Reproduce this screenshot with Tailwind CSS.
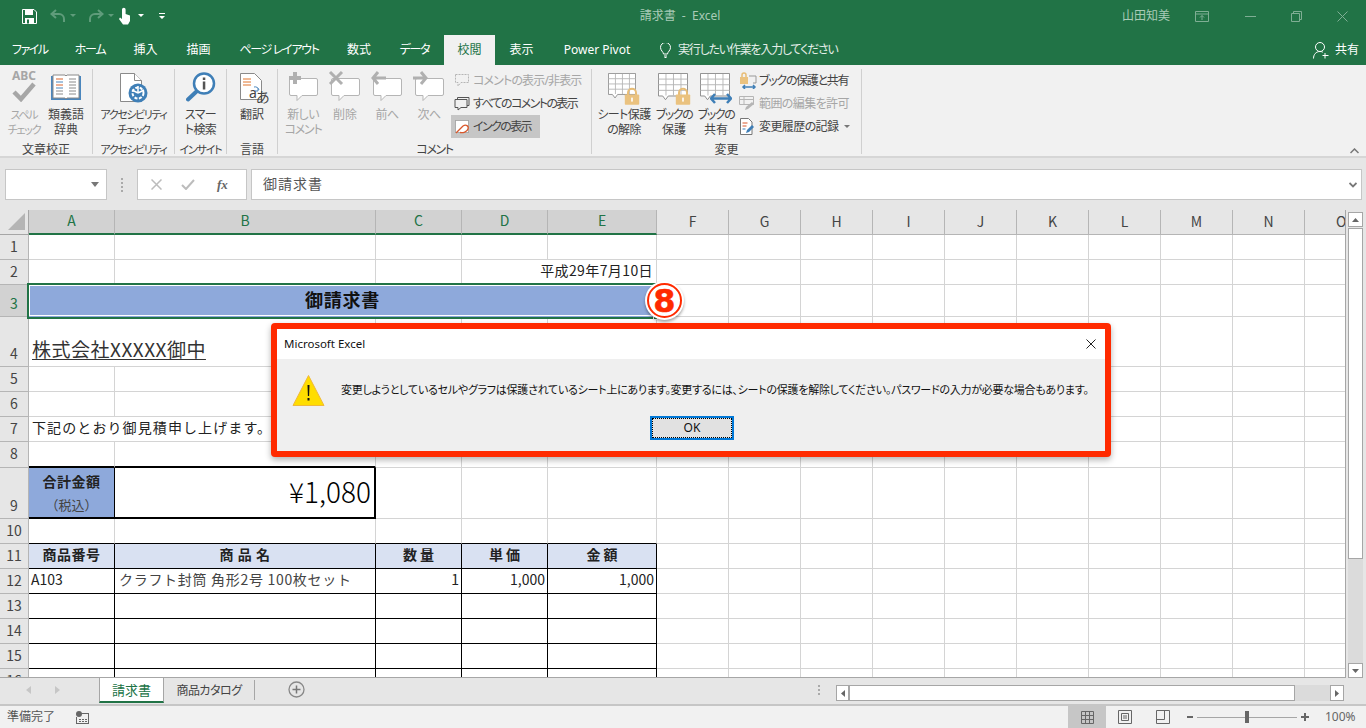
<!DOCTYPE html>
<html lang="ja">
<head>
    <meta charset="UTF-8">
    <title>請求書 - Excel</title>
    <script src="https://cdn.jsdelivr.net/npm/@tailwindcss/browser@4"></script>
</head>
<body class="relative w-[1366px] h-[728px] overflow-hidden flex flex-col bg-[#e6e6e6] text-[#444] text-[12px] font-[family-name:'Noto_Sans','Noto_Sans_CJK_JP',sans-serif] [font-feature-settings:'palt']">

    <svg class="hidden">
        <symbol id="bubble" viewBox="0 0 32 32">
            <path d="M4 6.500h25a1.500 1.500 0 0 1 1.500 1.500v14a1.500 1.500 0 0 1-1.500 1.500H15l-5 5v-5H4A1.500 1.500 0 0 1 2.500 22V8A1.500 1.500 0 0 1 4 6.500z" fill="#fff" stroke="#b5b5b5"/>
        </symbol>
        <symbol id="sheetgrid" viewBox="0 0 32 32">
            <path d="M.5.500h31v24H11l-3 4-3-4H.5z" fill="#fff" stroke="#8a8a8a"/>
            <path d="M.5 6.500h31M.5 12.500h31M.5 18.500h31M8.500 1v23M16.500 1v23M24.500 1v23" stroke="#b5b5b5" fill="none"/>
        </symbol>
        <symbol id="lock" viewBox="0 0 20 22">
            <path d="M5 10V7a5 5 0 0 1 10 0v3" fill="none" stroke="#e8bd76" stroke-width="2.500"/>
            <rect x="1" y="9" width="18" height="13" rx="1" fill="#eac27f"/>
            <rect x="9" y="13" width="2" height="5" fill="#fff"/>
        </symbol>
    </svg>

    <!-- title bar -->
    <header class="h-[35px] shrink-0 pb-[3px] bg-[#217346] flex items-center text-[#a9cbb7]">
        <div class="w-[600px] flex items-center pl-[22px]">
            <svg class="w-[15px] h-[15px]" viewBox="0 0 15 15"><path d="M.5.500h11.500l2.500 2.500v11.500H.5z" fill="none" stroke="#fff"/><rect x="3" y="1" width="8" height="5" fill="#fff"/><rect x="3" y="9" width="9" height="5.500" fill="#fff"/><rect x="5" y="10.500" width="2" height="4" fill="#217346"/></svg>
            <svg class="w-[16px] h-[15px] ml-[13px]" viewBox="0 0 16 15"><path d="M6 1 1.500 5 6 9M2 5h7a5 5 0 0 1 5 5v3" fill="none" stroke="#5f9c7b" stroke-width="2"/></svg>
            <svg class="w-[6px] h-[4px] ml-[4px]" viewBox="0 0 6 4"><path d="M0 0h6L3 3z" fill="#5f9c7b"/></svg>
            <svg class="w-[16px] h-[15px] ml-[12px]" viewBox="0 0 16 15"><path d="M10 1l4.500 4L10 9M14 5H7a5 5 0 0 0-5 5v3" fill="none" stroke="#5f9c7b" stroke-width="2"/></svg>
            <svg class="w-[6px] h-[4px] ml-[4px]" viewBox="0 0 6 4"><path d="M0 0h6L3 3z" fill="#5f9c7b"/></svg>
            <svg class="w-[13px] h-[18px] ml-[4px]" viewBox="0 0 13 18"><path d="M4 7V2.500a1.800 1.800 0 0 1 3.600 0V7l4.400 1.500V14l-2 3.500H5L1 12l1-1.500L4 12z" fill="#fff"/></svg>
            <svg class="w-[6px] h-[4px] ml-[7px]" viewBox="0 0 6 4"><path d="M0 0h6L3 3z" fill="#fff"/></svg>
            <svg class="w-[6px] h-[6px] ml-[15px]" viewBox="0 0 6 6"><path d="M0 0h6v1H0zM0 3h6L3 6z" fill="#fff"/></svg>
        </div>
        <div class="w-[160px] text-center text-[12px]">請求書 &nbsp;-&nbsp; Excel</div>
        <div class="ml-auto flex items-center">
            <span class="text-[12px] mr-[20px]">山田知美</span>
            <svg class="w-[14px] h-[11px] mr-[36px] ml-[5px]" viewBox="0 0 14 11"><path d="M.5.500h13v10H.5zM1 3h12M7 9V4.500M5 6.500l2-2 2 2" fill="none" stroke="#7fae94"/></svg>
            <svg class="w-[11px] h-[11px] mr-[35px]" viewBox="0 0 11 11"><path d="M0 5.500h11" stroke="#7fae94"/></svg>
            <svg class="w-[11px] h-[11px] mr-[35px]" viewBox="0 0 11 11"><path d="M.5 2.500h8v8h-8zM2.500 2.500v-2h8v8h-2" fill="none" stroke="#7fae94"/></svg>
            <svg class="w-[11px] h-[11px] mr-[18px]" viewBox="0 0 11 11"><path d="M.5.500l10 10M10.500.500l-10 10" stroke="#7fae94"/></svg>
        </div>
    </header>

    <!-- ribbon tabs -->
    <nav class="h-[30px] shrink-0 bg-[#217346] flex items-stretch text-white text-[12px] leading-[30px] whitespace-nowrap">
        <div class="w-[61px] pl-[12px] tracking-[-1.500px]">ファイル</div>
        <div class="w-[58px] text-center tracking-[-1.200px]">ホーム</div>
        <div class="w-[53px] text-center">挿入</div>
        <div class="w-[53px] text-center">描画</div>
        <div class="w-[108px] text-center tracking-[-1.300px]">ページ レイアウト</div>
        <div class="w-[52px] text-center">数式</div>
        <div class="w-[59px] text-center tracking-[-1.200px]">データ</div>
        <div class="w-[51px] text-center bg-[#f1f1f1] text-[#217346]">校閲</div>
        <div class="w-[53px] text-center">表示</div>
        <div class="w-[98px] text-center">Power Pivot</div>
        <div class="ml-[14px] flex items-center">
            <svg class="w-[11px] h-[15px] mr-[7px]" viewBox="0 0 11 15"><path d="M3.500 11c0-2-3-3.500-3-6.500a5 5 0 0 1 10 0c0 3-3 4.500-3 6.500zM4 13h3M4.500 14.500h2" fill="none" stroke="#fff"/></svg>
            <span class="text-[#e4eee8] tracking-[-1.200px]">実行したい作業を入力してください</span>
        </div>
        <div class="ml-auto flex items-center pr-[7px]">
            <svg class="w-[16px] h-[17px] mr-[6px]" viewBox="0 0 16 17"><circle cx="7" cy="5" r="4.500" fill="none" stroke="#fff"/><path d="M.5 16.500c0-4 2.500-7 6.500-7 1 0 2 .2 2.800.7M12 11v5.500M9.500 13.500h6" fill="none" stroke="#fff"/></svg>
            <span>共有</span>
        </div>
    </nav>

    <!-- ribbon -->
    <section class="h-[93px] shrink-0 bg-[#f1f1f1] border-b-2 border-[#d6d6d6] flex pt-[4px] relative leading-[15px] whitespace-nowrap tracking-[-0.600px]">
        <div class="w-[93px] h-[85px] border-r border-[#d0d0d0] flex flex-col">
            <div class="flex pl-[3px]">
                <div class="w-[42px] flex flex-col items-center text-[#a6a6a6] text-[11px] tracking-[-1.200px]">
                    <div class="h-[38px] w-[30px] relative">
                        <span class="absolute top-0 left-0 w-full text-center text-[12px] font-bold leading-[14px] tracking-normal">ABC</span>
                        <svg class="absolute left-[3px] top-[12px] w-[24px] h-[21px]" viewBox="0 0 24 21"><path d="M2 11l7 7L22 3" fill="none" stroke="#a6a6a6" stroke-width="4.500"/></svg>
                    </div>
                    <span>スペル</span><span>チェック</span>
                </div>
                <div class="w-[42px] flex flex-col items-center">
                    <div class="h-[38px] pt-[5px]">
                        <svg class="w-[32px] h-[27px]" viewBox="0 0 32 27"><path d="M1 2h30v24H1z" fill="#4a86bd"/><path d="M3 1h12l1 1 1-1h12v23H17l-1 1-1-1H3z" fill="#fff" stroke="#8a8a8a"/><path d="M6 5h7" stroke="#d9622b"/><path d="M6 8h7M6 14h7" stroke="#4a86bd"/><path d="M6 11h7" stroke="#d9622b"/><path d="M6 17h7M6 20h7M19 5h7M19 8h7M19 11h7M19 14h7M19 17h7M19 20h7" stroke="#8a8a8a"/></svg>
                    </div>
                    <span class="tracking-normal">類義語</span><span class="tracking-normal">辞典</span>
                </div>
            </div>
            <div class="mt-auto mb-[-3px] text-center tracking-normal">文章校正</div>
        </div>
        <div class="w-[82px] h-[85px] border-r border-[#d0d0d0] flex flex-col items-center text-[11px] tracking-[-1.400px]">
            <div class="h-[38px] pt-[4px]">
                <svg class="w-[30px] h-[30px]" viewBox="0 0 30 30"><path d="M1.500.500h14l7 7V28.500h-21z" fill="#fff" stroke="#8a8a8a"/><path d="M15.500.500v7h7" fill="#fff" stroke="#8a8a8a"/><circle cx="19" cy="20" r="9.500" fill="#3f7fb7"/><circle cx="19" cy="20" r="5.500" fill="none" stroke="#fff" stroke-width="2" stroke-dasharray="3 1.500"/><path d="M19 13v7M13 17l6 3M25 17l-6 3" stroke="#fff" stroke-width="1.500"/></svg>
            </div>
            <span>アクセシビリティ</span><span>チェック</span>
            <div class="mt-auto mb-[-3px]">アクセシビリティ</div>
        </div>
        <div class="w-[52px] h-[85px] border-r border-[#d0d0d0] flex flex-col items-center">
            <div class="h-[38px] pt-[3px]">
                <svg class="w-[30px] h-[30px]" viewBox="0 0 30 30"><path d="M11 19 2 27.500" stroke="#3f7fb7" stroke-width="4" stroke-linecap="round"/><circle cx="18" cy="11.500" r="10" fill="#fff" stroke="#3f7fb7" stroke-width="2.500"/><rect x="16.800" y="9.500" width="2.500" height="8" fill="#555"/><rect x="16.800" y="5.500" width="2.500" height="2.500" fill="#555"/></svg>
            </div>
            <span>スマー</span><span>ト検索</span>
            <div class="mt-auto mb-[-3px] text-[11px] tracking-[-1.200px]">インサイト</div>
        </div>
        <div class="w-[51px] h-[85px] border-r border-[#d0d0d0] flex flex-col items-center">
            <div class="h-[38px] relative w-[30px]">
                <svg class="w-[22px] h-[27px] absolute left-[3px] top-[4px]" viewBox="0 0 22 27"><path d="M.5.500h14l7 7V26.500H.5z" fill="#fff" stroke="#8a8a8a"/><path d="M3 6h8M3 9h8" stroke="#e0752d"/><path d="M3 12h8" stroke="#e0752d"/><path d="M14 14a4 4 0 0 1 5 3M18 15v3h-3" fill="none" stroke="#4a86bd"/></svg>
                <span class="absolute left-[12px] top-[17px] text-[14px] leading-[14px] text-[#444]">a</span>
                <span class="absolute left-[19px] top-[21px] text-[14px] leading-[14px] text-[#444]">あ</span>
            </div>
            <span class="tracking-normal">翻訳</span>
            <div class="mt-auto mb-[-3px] tracking-normal">言語</div>
        </div>
        <div class="w-[314px] h-[85px] border-r border-[#d0d0d0] flex flex-col">
            <div class="flex pl-[4px]">
                <div class="w-[42px] flex flex-col items-center text-[#a6a6a6]">
                    <div class="h-[38px] w-[32px] relative">
                        <svg class="absolute left-0 top-[3px] w-[32px] h-[32px]"><use href="#bubble"/></svg>
                        <svg class="absolute left-[1px] top-[2px] w-[14px] h-[14px]" viewBox="0 0 14 14"><path d="M7 1v12M1 7h12" stroke="#b0b0b0" stroke-width="4"/></svg>
                    </div>
                    <span>新しい</span><span class="tracking-[-1.200px]">コメント</span>
                </div>
                <div class="w-[42px] flex flex-col items-center text-[#a6a6a6]">
                    <div class="h-[38px] w-[32px] relative">
                        <svg class="absolute left-0 top-[3px] w-[32px] h-[32px]"><use href="#bubble"/></svg>
                        <svg class="absolute left-[-1px] top-[1px] w-[16px] h-[16px]" viewBox="0 0 16 16"><path d="M2 2l12 12M14 2 2 14" stroke="#b0b0b0" stroke-width="3"/></svg>
                    </div>
                    <span class="tracking-normal">削除</span>
                </div>
                <div class="w-[42px] flex flex-col items-center text-[#a6a6a6]">
                    <div class="h-[38px] w-[32px] relative">
                        <svg class="absolute left-0 top-[3px] w-[32px] h-[32px]"><use href="#bubble"/></svg>
                        <svg class="absolute left-0 top-[2px] w-[15px] h-[14px]" viewBox="0 0 15 14"><path d="M7 1 2 7l5 6M2 7h13" fill="none" stroke="#b0b0b0" stroke-width="3"/></svg>
                    </div>
                    <span>前へ</span>
                </div>
                <div class="w-[42px] flex flex-col items-center text-[#a6a6a6]">
                    <div class="h-[38px] w-[32px] relative">
                        <svg class="absolute left-0 top-[3px] w-[32px] h-[32px]"><use href="#bubble"/></svg>
                        <svg class="absolute left-0 top-[2px] w-[15px] h-[14px]" viewBox="0 0 15 14"><path d="M8 1l5 6-5 6M13 7H0" fill="none" stroke="#b0b0b0" stroke-width="3"/></svg>
                    </div>
                    <span>次へ</span>
                </div>
                <div class="flex flex-col ml-[1px]">
                    <div class="h-[23px] flex items-center pl-[3px] text-[#a6a6a6]">
                        <svg class="w-[16px] h-[15px] mr-[3px]" viewBox="0 0 16 15"><path d="M1.500 1.500h13v8H7l-3 3.500V9.500H1.500z" fill="none" stroke="#b5b5b5" stroke-dasharray="2 1"/></svg>
                        <span class="tracking-[-0.850px]">コメントの表示/非表示</span>
                    </div>
                    <div class="h-[23px] flex items-center pl-[3px]">
                        <svg class="w-[16px] h-[15px] mr-[3px]" viewBox="0 0 16 15"><path d="M3.500 3.500v-2h11.500v8h-2M1 3.500h12v8H7l-3 2.500v-2.500H1z" fill="none" stroke="#555"/></svg>
                        <span class="tracking-[-1.600px]">すべてのコメントの表示</span>
                    </div>
                    <div class="h-[23px] w-[89px] flex items-center pl-[3px] bg-[#c6c6c6]">
                        <svg class="w-[16px] h-[15px] mr-[3px]" viewBox="0 0 16 15"><path d="M1.500 1.500h13v12h-13z" fill="#fff" stroke="#777" stroke-dasharray="1 1"/><path d="M2 14 9 7c3-2 6 0 5 3s-5 4-8 3.500" fill="none" stroke="#d9572b" stroke-width="1.300"/></svg>
                        <span class="tracking-[-1.600px]">インクの表示</span>
                    </div>
                </div>
            </div>
            <div class="absolute top-[4px] left-[278px] w-[313px] h-[85px] flex items-end justify-center pointer-events-none"><span class="mb-[-3px] tracking-[-1.400px]">コメント</span></div>
        </div>
        <div class="w-[270px] h-[85px] border-r border-[#d0d0d0] flex flex-col">
            <div class="flex pl-[5px]">
                <div class="w-[54px] mr-[3px] flex flex-col items-center">
                    <div class="h-[38px] w-[32px] relative">
                        <svg class="absolute left-[0px] top-[4px] w-[28px] h-[28px]"><use href="#sheetgrid"/></svg>
                        <svg class="absolute left-[16px] top-[18px] w-[16px] h-[18px]"><use href="#lock"/></svg>
                    </div>
                    <span>シート保護</span><span>の解除</span>
                </div>
                <div class="w-[40px] mr-[2px] flex flex-col items-center">
                    <div class="h-[38px] w-[32px] relative">
                        <svg class="absolute left-[0px] top-[4px] w-[30px] h-[30px]"><use href="#sheetgrid"/></svg>
                        <svg class="absolute left-[17px] top-[18px] w-[16px] h-[18px]"><use href="#lock"/></svg>
                    </div>
                    <span class="tracking-[-1.500px]">ブックの</span><span class="tracking-normal">保護</span>
                </div>
                <div class="w-[40px] mr-[3px] flex flex-col items-center">
                    <div class="h-[38px] w-[32px] relative">
                        <svg class="absolute left-[0px] top-[4px] w-[30px] h-[30px]"><use href="#sheetgrid"/></svg>
                        <svg class="absolute left-[10px] top-[24px] w-[22px] h-[11px]" viewBox="0 0 22 11"><path d="M5 1 1 5.500 5 10M17 1l4 4.500L17 10M2 5.500h18" fill="none" stroke="#3f7fb7" stroke-width="2.500"/></svg>
                    </div>
                    <span class="tracking-[-1.500px]">ブックの</span><span class="tracking-normal">共有</span>
                </div>
                <div class="flex flex-col">
                    <div class="h-[23px] flex items-center">
                        <svg class="w-[18px] h-[17px] mr-[2px]" viewBox="0 0 18 17"><rect x="1" y="5" width="8" height="7" fill="#eac27f"/><path d="M3 5V3a2 2 0 0 1 4 0v2" fill="none" stroke="#e8bd76" stroke-width="1.500"/><path d="M10 4h7v7h-3" fill="none" stroke="#999"/><path d="M6 13l-2 2 2 2M14 13l2 2-2 2M4 15h12" fill="none" stroke="#3f7fb7" stroke-width="1.500"/></svg>
                        <span class="tracking-[-1.300px]">ブックの保護と共有</span>
                    </div>
                    <div class="h-[23px] flex items-center text-[#a6a6a6]">
                        <svg class="w-[16px] h-[15px] mr-[4px]" viewBox="0 0 16 15"><path d="M.5.500h14v8H.5zM.5 3.500h14M5 .5v8" fill="none" stroke="#b5b5b5"/><path d="M6 14l1-3 6-5 2 2-6 5z" fill="#b5b5b5"/></svg>
                        <span>範囲の編集を許可</span>
                    </div>
                    <div class="h-[23px] flex items-center">
                        <svg class="w-[16px] h-[17px] mr-[4px]" viewBox="0 0 16 17"><path d="M1.500.500h8l3.500 3.500v12.500h-11.500z" fill="#fff" stroke="#777"/><path d="M3.500 5h5M3.500 8h4" stroke="#d9572b"/><path d="M3.500 11h3" stroke="#3f7fb7"/><path d="M7 15l1-3 5-5 2 2-5 5z" fill="#3f7fb7"/></svg>
                        <span>変更履歴の記録</span>
                        <svg class="w-[6px] h-[4px] ml-[6px]" viewBox="0 0 6 4"><path d="M0 0h6L3 3z" fill="#777"/></svg>
                    </div>
                </div>
            </div>
            <div class="mt-auto mb-[-3px] text-center tracking-normal">変更</div>
        </div>
        <svg class="absolute right-[7px] bottom-[2px] w-[9px] h-[6px]" viewBox="0 0 9 6"><path d="M.5 5 4.500 1l4 4" fill="none" stroke="#777" stroke-width="1.500"/></svg>
    </section>

    <!-- formula bar -->
    <section class="h-[52px] shrink-0 flex items-start pt-[11px] pl-[5px] text-[13px]">
        <div class="w-[102px] h-[31px] bg-white border border-[#c6c6c6] flex items-center justify-end pr-[7px]">
            <svg class="w-[8px] h-[5px]" viewBox="0 0 8 5"><path d="M0 0h8L4 5z" fill="#777"/></svg>
        </div>
        <div class="w-[30px] h-[31px] flex flex-col items-center justify-center gap-[2px]">
            <i class="w-[2px] h-[2px] bg-[#aaa]"></i><i class="w-[2px] h-[2px] bg-[#aaa]"></i><i class="w-[2px] h-[2px] bg-[#aaa]"></i><i class="w-[2px] h-[2px] bg-[#aaa]"></i>
        </div>
        <div class="w-[110px] h-[31px] bg-white border border-[#c6c6c6] flex items-center pl-[13px]">
            <svg class="w-[11px] h-[11px]" viewBox="0 0 11 11"><path d="M.5.500l10 10M10.500.500l-10 10" stroke="#bcbcbc" stroke-width="1.500"/></svg>
            <svg class="w-[14px] h-[11px] ml-[19px]" viewBox="0 0 14 11"><path d="M1 6l4 4 8-9" fill="none" stroke="#bcbcbc" stroke-width="2"/></svg>
            <span class="ml-[22px] text-[13px] italic font-bold text-[#666] font-[family-name:'Liberation_Serif',serif]">fx</span>
        </div>
        <div class="w-[1111px] h-[31px] ml-[4px] bg-white border border-[#c6c6c6] flex items-center pl-[11px] pb-[3px] text-[#555] text-[14px] tracking-[1px]">
            御請求書
            <svg class="ml-auto mr-[4px] mt-[3px] w-[8px] h-[6px]" viewBox="0 0 8 6"><path d="M.5 1l3.500 3.500L7.500 1" fill="none" stroke="#777" stroke-width="1.800"/></svg>
        </div>
    </section>

    <!-- sheet -->
    <main class="h-[468px] shrink-0 flex">
        <div class="w-[1346px] h-[468px] overflow-hidden bg-white border-r border-[#a6a6a6] border-b">
            <table class="w-[1414px] table-fixed border-separate border-spacing-0 text-[14px] text-[#222] font-[family-name:'Noto_Sans_CJK_JP',sans-serif] [font-feature-settings:normal] [&_td]:border-r [&_td]:border-b [&_td]:border-[#d4d4d4] [&_td]:whitespace-nowrap [&_td]:overflow-hidden [&_td]:pb-[3px] [&_th]:font-normal [&_th]:pb-[2px] [&_th]:bg-[#e6e6e6] [&_th]:border-r [&_th]:border-b [&_th]:border-[#b5b5b5] [&_th]:text-[#444]">
                <colgroup>
                    <col class="w-[29px]"><col class="w-[86px]"><col class="w-[261px]"><col class="w-[86px]"><col class="w-[86px]"><col class="w-[109px]">
                    <col class="w-[72px]"><col class="w-[72px]"><col class="w-[72px]"><col class="w-[72px]"><col class="w-[72px]"><col class="w-[72px]"><col class="w-[72px]"><col class="w-[72px]"><col class="w-[72px]"><col class="w-[109px]">
                </colgroup>
                <tr class="h-[25px]">
                    <th class="border-[#a6a6a6]! relative"><svg class="absolute right-[3px] bottom-[4px] w-[17px] h-[17px]" viewBox="0 0 17 17"><path d="M17 0v17H0z" fill="#b5b5b5"/></svg></th>
                    <th class="bg-[#d2d2d2]! border-b-2! border-b-[#217346]! text-[#217346]!">A</th>
                    <th class="bg-[#d2d2d2]! border-b-2! border-b-[#217346]! text-[#217346]!">B</th>
                    <th class="bg-[#d2d2d2]! border-b-2! border-b-[#217346]! text-[#217346]!">C</th>
                    <th class="bg-[#d2d2d2]! border-b-2! border-b-[#217346]! text-[#217346]!">D</th>
                    <th class="bg-[#d2d2d2]! border-b-2! border-b-[#217346]! text-[#217346]!">E</th>
                    <th>F</th><th>G</th><th>H</th><th>I</th><th>J</th><th>K</th><th>L</th><th>M</th><th>N</th><th class="text-left! pl-[31px]">O</th>
                </tr>
                <tr class="h-[25px]"><th>1</th><td></td><td></td><td></td><td></td><td></td><td></td><td></td><td></td><td></td><td></td><td></td><td></td><td></td><td></td><td></td></tr>
                <tr class="h-[25px]"><th>2</th><td></td><td></td><td></td><td colspan="2" class="text-right pr-[3px] tracking-[0.4px]">平成29年7月10日</td><td></td><td></td><td></td><td></td><td></td><td></td><td></td><td></td><td></td><td></td></tr>
                <tr class="h-[32px]"><th class="bg-[#d2d2d2]! text-[#217346]! align-bottom">3</th><td colspan="5" class="relative bg-[#8ea9db] border-[#8ea9db]! outline-2 outline-[#217346] shadow-[inset_0_0_0_1px_#fff] text-center text-[18px] leading-[24px] tracking-[0.7px] font-bold text-[#111]">御請求書</td><td></td><td></td><td></td><td></td><td></td><td></td><td></td><td></td><td></td><td></td></tr>
                <tr class="h-[50px]"><th class="align-bottom">4</th><td colspan="2" class="align-bottom pl-[3px] text-[19px] leading-[28px] tracking-[0.5px] text-[#333] underline underline-offset-2">株式会社XXXXX御中</td><td></td><td></td><td></td><td></td><td></td><td></td><td></td><td></td><td></td><td></td><td></td><td></td><td></td></tr>
                <tr class="h-[25px]"><th>5</th><td></td><td></td><td></td><td></td><td></td><td></td><td></td><td></td><td></td><td></td><td></td><td></td><td></td><td></td><td></td></tr>
                <tr class="h-[25px]"><th>6</th><td></td><td></td><td></td><td></td><td></td><td></td><td></td><td></td><td></td><td></td><td></td><td></td><td></td><td></td><td></td></tr>
                <tr class="h-[25px]"><th>7</th><td colspan="2" class="pl-[3px] tracking-[1.100px]">下記のとおり御見積申し上げます。</td><td></td><td></td><td></td><td></td><td></td><td></td><td></td><td></td><td></td><td></td><td></td><td></td><td></td></tr>
                <tr class="h-[26px]"><th>8</th><td class="border-b-2! border-b-black!"></td><td class="border-b-2! border-b-black!"></td><td></td><td></td><td></td><td></td><td></td><td></td><td></td><td></td><td></td><td></td><td></td><td></td><td></td></tr>
                <tr class="h-[51px]"><th class="align-bottom">9</th>
                    <td class="pb-0! bg-[#8ea9db] border-r-black! border-b-2! border-b-black! text-center text-[13px] leading-[24px]"><b class="block text-[14px] tracking-[0.5px]">合計金額</b><span class="block text-[#444]">（税込）</span></td>
                    <td class="border-r-2! border-r-black! border-b-2! border-b-black! text-right pr-[3px] text-[28px] leading-[40px] font-light text-black">¥1,080</td>
                    <td></td><td></td><td></td><td></td><td></td><td></td><td></td><td></td><td></td><td></td><td></td><td></td><td></td></tr>
                <tr class="h-[25px]"><th>10</th><td class="border-b-black!"></td><td class="border-b-black!"></td><td class="border-b-black!"></td><td class="border-b-black!"></td><td class="border-b-black!"></td><td></td><td></td><td></td><td></td><td></td><td></td><td></td><td></td><td></td><td></td></tr>
                <tr class="h-[25px]"><th>11</th><td class="bg-[#d9e1f2] border-black! text-center font-bold tracking-[0.5px]">商品番号</td><td class="bg-[#d9e1f2] border-black! text-center font-bold tracking-[0.5px]">商 品 名</td><td class="bg-[#d9e1f2] border-black! text-center font-bold">数 量</td><td class="bg-[#d9e1f2] border-black! text-center font-bold">単 価</td><td class="bg-[#d9e1f2] border-black! text-center font-bold">金 額</td><td></td><td></td><td></td><td></td><td></td><td></td><td></td><td></td><td></td><td></td></tr>
                <tr class="h-[25px]"><th>12</th><td class="border-black! pl-[2px]">A103</td><td class="border-black! pl-[4px] tracking-[0.7px] text-[#444]">クラフト封筒 角形2号 100枚セット</td><td class="border-black! text-right pr-[2px]">1</td><td class="border-black! text-right pr-[2px]">1,000</td><td class="border-black! text-right pr-[2px]">1,000</td><td></td><td></td><td></td><td></td><td></td><td></td><td></td><td></td><td></td><td></td></tr>
                <tr class="h-[25px]"><th>13</th><td class="border-black!"></td><td class="border-black!"></td><td class="border-black!"></td><td class="border-black!"></td><td class="border-black!"></td><td></td><td></td><td></td><td></td><td></td><td></td><td></td><td></td><td></td><td></td></tr>
                <tr class="h-[25px]"><th>14</th><td class="border-black!"></td><td class="border-black!"></td><td class="border-black!"></td><td class="border-black!"></td><td class="border-black!"></td><td></td><td></td><td></td><td></td><td></td><td></td><td></td><td></td><td></td><td></td></tr>
                <tr class="h-[25px]"><th>15</th><td class="border-black!"></td><td class="border-black!"></td><td class="border-black!"></td><td class="border-black!"></td><td class="border-black!"></td><td></td><td></td><td></td><td></td><td></td><td></td><td></td><td></td><td></td><td></td></tr>
                <tr class="h-[25px]"><th>16</th><td class="border-black!"></td><td class="border-black!"></td><td class="border-black!"></td><td class="border-black!"></td><td class="border-black!"></td><td></td><td></td><td></td><td></td><td></td><td></td><td></td><td></td><td></td><td></td></tr>
            </table>
        </div>
        <div class="w-[20px] flex flex-col items-center pt-[2px] pl-[2px] pr-[3px] bg-[#e6e6e6]">
            <div class="w-[15px] h-[15px] bg-white border border-[#a6a6a6] flex items-center justify-center"><svg class="w-[7px] h-[4px]" viewBox="0 0 7 4"><path d="M0 4h7L3.500 0z" fill="#666"/></svg></div>
            <div class="w-[15px] h-[331px] mt-[1px] bg-white border border-[#a6a6a6]"></div>
            <div class="w-[15px] flex-1 bg-[#dbdbdb]"></div>
            <div class="w-[15px] h-[15px] bg-white border border-[#a6a6a6] flex items-center justify-center"><svg class="w-[7px] h-[4px]" viewBox="0 0 7 4"><path d="M0 0h7L3.500 4z" fill="#666"/></svg></div>
        </div>
    </main>

    <!-- sheet tabs -->
    <section class="h-[28px] shrink-0 flex items-start border-b-2 border-[#c6c6c6] text-[12px] text-[#444]">
        <svg class="w-[5px] h-[8px] ml-[26px] mt-[8px]" viewBox="0 0 5 8"><path d="M5 0v8L0 4z" fill="#c6c6c6"/></svg>
        <svg class="w-[5px] h-[8px] ml-[24px] mt-[8px]" viewBox="0 0 5 8"><path d="M0 0v8l5-4z" fill="#c6c6c6"/></svg>
        <div class="w-[65px] h-[25px] ml-[39px] bg-white border-x border-[#a6a6a6] border-b-2 border-b-[#217346] text-center text-[#217346] leading-[25px] text-[13px]">請求書</div>
        <div class="w-[90px] h-[25px] text-center leading-[25px] tracking-[-0.500px]">商品カタログ</div>
        <i class="w-px h-[20px] mt-[2px] bg-[#a6a6a6]"></i>
        <svg class="w-[17px] h-[17px] ml-[33px] mt-[3px]" viewBox="0 0 17 17"><circle cx="8.500" cy="8.500" r="7.500" fill="none" stroke="#888" stroke-width="1.300"/><path d="M8.500 4.500v8M4.500 8.500h8" stroke="#777" stroke-width="1.500"/></svg>
        <div class="ml-[513px] mt-[7px] flex flex-col gap-[2px]"><i class="w-[2px] h-[2px] bg-[#aaa]"></i><i class="w-[2px] h-[2px] bg-[#aaa]"></i><i class="w-[2px] h-[2px] bg-[#aaa]"></i></div>
        <div class="ml-[16px] mt-[7px] w-[508px] h-[16px] flex bg-[#dbdbdb]">
            <div class="w-[13px] h-[16px] bg-white border border-[#a6a6a6] flex items-center justify-center"><svg class="w-[4px] h-[7px]" viewBox="0 0 4 7"><path d="M4 0v7L0 3.500z" fill="#666"/></svg></div>
            <div class="w-[446px] h-[16px] bg-white border border-[#a6a6a6]"></div>
            <div class="w-[14px] h-[16px] ml-auto bg-white border border-[#a6a6a6] flex items-center justify-center"><svg class="w-[4px] h-[7px]" viewBox="0 0 4 7"><path d="M0 0v7l4-3.500z" fill="#666"/></svg></div>
        </div>
    </section>

    <!-- status bar -->
    <footer class="h-[22px] shrink-0 bg-[#f1f1f1] flex items-center text-[12px] text-[#555]">
        <span class="pl-[7px]">準備完了</span>
        <svg class="w-[13px] h-[13px] ml-[21px]" viewBox="0 0 13 13"><circle cx="3" cy="3" r="3" fill="#666"/><path d="M5 2h8v11H0V6h1v6h11V3H5zM3 8h2v1H3zM6 8h2v1H6zM9 8h2v1H9zM3 10h2v1H3zM6 10h2v1H6zM9 10h2v1H9z" fill="#666"/></svg>
        <div class="ml-auto w-[38px] h-[22px] bg-[#c6c6c6] flex items-center justify-center">
            <svg class="w-[13px] h-[13px]" viewBox="0 0 13 13"><path d="M.5.500h12v12H.5zM.5 4.500h12M.5 8.500h12M4.500 1v12M8.500 1v12" fill="none" stroke="#666"/></svg>
        </div>
        <svg class="w-[14px] h-[14px] ml-[12px]" viewBox="0 0 14 14"><path d="M.5.500h13v13H.5z" fill="none" stroke="#666"/><path d="M3.500 3.500h7v7h-7zM5 6h4M5 8h4" fill="none" stroke="#666"/></svg>
        <svg class="w-[14px] h-[14px] ml-[24px]" viewBox="0 0 14 14"><path d="M.5.500h13v13H.5zM.5 9.500h8v-9" fill="none" stroke="#666"/></svg>
        <svg class="w-[6px] h-[2px] ml-[17px]" viewBox="0 0 6 2"><path d="M0 0h6v2H0z" fill="#666"/></svg>
        <div class="relative w-[100px] h-px ml-[4px] bg-[#a6a6a6]"><i class="absolute left-[48px] top-[-6px] w-[4px] h-[12px] bg-[#666]"></i></div>
        <svg class="w-[8px] h-[8px] ml-[4px]" viewBox="0 0 8 8"><path d="M3 0h2v3h3v2H5v3H3V5H0V3h3z" fill="#666"/></svg>
        <span class="ml-[16px] mr-[8px] w-[33px] text-[#666]">100%</span>
    </footer>

    <!-- fill handle of the selection -->
    <i class="absolute left-[653px] top-[315px] w-[5px] h-[5px] bg-[#217346] border border-white"></i>

    <!-- step badge -->
    <div class="absolute left-[645px] top-[281px] w-[39px] h-[39px] rounded-full bg-white shadow-[0_2px_3px_rgba(0,0,0,0.35)] flex items-center justify-center">
        <div class="w-[35px] h-[35px] rounded-full border-2 border-[#ff2a00] flex items-center justify-center text-[#ff2a00] text-[32px] leading-none font-bold font-[family-name:'DejaVu_Sans',sans-serif] [-webkit-text-stroke:0.5px_#ff2a00]">8</div>
    </div>

    <!-- dialog -->
    <div class="absolute left-[271px] top-[323px] w-[840px] h-[134px] rounded-[4px] border-[6px] border-[#ff2a00] bg-[#efefef] shadow-[0_3px_6px_rgba(0,0,0,0.3)] text-[#111] flex flex-col">
        <div class="h-[30px] shrink-0 bg-white flex items-center pl-[7px] pr-[9px] text-[11.500px]">
            Microsoft Excel
            <svg class="ml-auto w-[10px] h-[10px]" viewBox="0 0 10 10"><path d="M.5.500l9 9M9.500.500l-9 9" stroke="#222"/></svg>
        </div>
        <div class="flex items-center pl-[15px] mt-[15px]">
            <svg class="w-[33px] h-[33px] shrink-0" viewBox="0 0 33 33"><path d="M16.500 1.500 32 31.500H1z" fill="#ffdd00" stroke="#f0b93a"/><path d="M15.500 11h2l-.4 11h-1.200zM15.500 24h2v2.500h-2z" fill="#111"/></svg>
            <p class="ml-[16px] text-[11px] tracking-[-0.250px] whitespace-nowrap">変更しようとしているセルやグラフは保護されているシート上にあります。変更するには、シートの保護を解除してください。パスワードの入力が必要な場合もあります。</p>
        </div>
        <div class="mt-[9px] ml-[373px] w-[84px] h-[24px] border-2 border-[#0078d7] bg-[#e1e1e1] flex items-center justify-center">
            <div class="w-[80px] h-[20px] border border-dotted border-black flex items-center justify-center text-[12px]">OK</div>
        </div>
    </div>
</body>
</html>
